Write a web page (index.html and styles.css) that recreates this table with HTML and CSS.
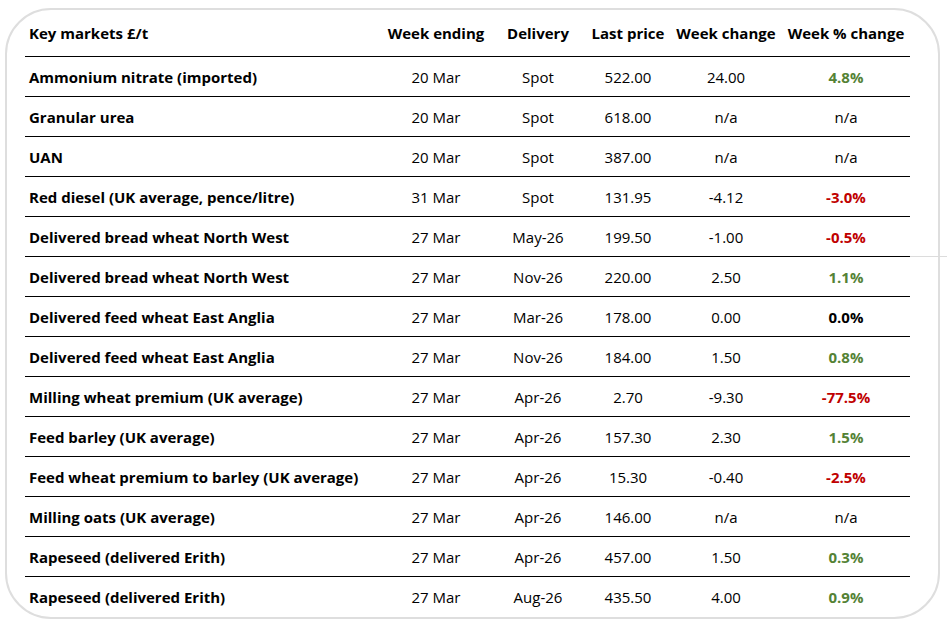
FILE: index.html
```html
<!DOCTYPE html>
<html lang="en">
<head>
<meta charset="utf-8">
<title>Key markets</title>
<link rel="stylesheet" href="styles.css">
</head>
<body>
<div class="card">
  <div class="table">
    <div class="row head">
      <div class="c name">Key markets £/t</div>
      <div class="c">Week ending</div>
      <div class="c">Delivery</div>
      <div class="c">Last price</div>
      <div class="c">Week change</div>
      <div class="c">Week % change</div>
    </div>
    <div class="row"><div class="c name">Ammonium nitrate (imported)</div><div class="c">20 Mar</div><div class="c">Spot</div><div class="c">522.00</div><div class="c">24.00</div><div class="c pct up">4.8%</div></div>
    <div class="row"><div class="c name">Granular urea</div><div class="c">20 Mar</div><div class="c">Spot</div><div class="c">618.00</div><div class="c">n/a</div><div class="c">n/a</div></div>
    <div class="row"><div class="c name">UAN</div><div class="c">20 Mar</div><div class="c">Spot</div><div class="c">387.00</div><div class="c">n/a</div><div class="c">n/a</div></div>
    <div class="row"><div class="c name">Red diesel (UK average, pence/litre)</div><div class="c">31 Mar</div><div class="c">Spot</div><div class="c">131.95</div><div class="c">-4.12</div><div class="c pct down">-3.0%</div></div>
    <div class="row"><div class="c name">Delivered bread wheat North West</div><div class="c">27 Mar</div><div class="c">May-26</div><div class="c">199.50</div><div class="c">-1.00</div><div class="c pct down">-0.5%</div></div>
    <div class="row"><div class="c name">Delivered bread wheat North West</div><div class="c">27 Mar</div><div class="c">Nov-26</div><div class="c">220.00</div><div class="c">2.50</div><div class="c pct up">1.1%</div></div>
    <div class="row"><div class="c name">Delivered feed wheat East Anglia</div><div class="c">27 Mar</div><div class="c">Mar-26</div><div class="c">178.00</div><div class="c">0.00</div><div class="c pct">0.0%</div></div>
    <div class="row"><div class="c name">Delivered feed wheat East Anglia</div><div class="c">27 Mar</div><div class="c">Nov-26</div><div class="c">184.00</div><div class="c">1.50</div><div class="c pct up">0.8%</div></div>
    <div class="row"><div class="c name">Milling wheat premium (UK average)</div><div class="c">27 Mar</div><div class="c">Apr-26</div><div class="c">2.70</div><div class="c">-9.30</div><div class="c pct down">-77.5%</div></div>
    <div class="row"><div class="c name">Feed barley (UK average)</div><div class="c">27 Mar</div><div class="c">Apr-26</div><div class="c">157.30</div><div class="c">2.30</div><div class="c pct up">1.5%</div></div>
    <div class="row"><div class="c name">Feed wheat premium to barley (UK average)</div><div class="c">27 Mar</div><div class="c">Apr-26</div><div class="c">15.30</div><div class="c">-0.40</div><div class="c pct down">-2.5%</div></div>
    <div class="row"><div class="c name">Milling oats (UK average)</div><div class="c">27 Mar</div><div class="c">Apr-26</div><div class="c">146.00</div><div class="c">n/a</div><div class="c">n/a</div></div>
    <div class="row"><div class="c name">Rapeseed (delivered Erith)</div><div class="c">27 Mar</div><div class="c">Apr-26</div><div class="c">457.00</div><div class="c">1.50</div><div class="c pct up">0.3%</div></div>
    <div class="row last"><div class="c name">Rapeseed (delivered Erith)</div><div class="c">27 Mar</div><div class="c">Aug-26</div><div class="c">435.50</div><div class="c">4.00</div><div class="c pct up">0.9%</div></div>
  </div>
</div>
</body>
</html>
```

FILE: styles.css
```css
* { box-sizing: border-box; }
html, body { margin: 0; padding: 0; background: #fff; }
body {
  font-family: "Open Sans", "Liberation Sans", sans-serif;
  font-size: 15px;
  color: #000;
  width: 947px;
  height: 628px;
  overflow: hidden;
  position: relative;
}
.card {
  margin: 8px 0 0 5px;
  width: 935px;
  height: 611px;
  border: 2px solid #dedede;
  border-radius: 46px;
  padding: 0 0 0 18px;
}
.card::after {
  content: "";
  position: absolute;
  left: 910px;
  top: 256px;
  width: 37px;
  height: 1px;
  background: #dcdcdc;
}
.table { width: 885px; }
.row {
  display: grid;
  grid-template-columns: 357px 108px 96px 84px 112px 128px;
  align-items: center;
  height: 40px;
  border-bottom: 1px solid #000;
}
.row.head { height: 47px; font-weight: bold; }
.row.last { border-bottom: none; }
.c { text-align: center; white-space: nowrap; }
.c.name { text-align: left; padding-left: 4px; font-weight: bold; }
.pct { font-weight: bold; }
.up { color: #548235; }
.down { color: #c00000; }
```
